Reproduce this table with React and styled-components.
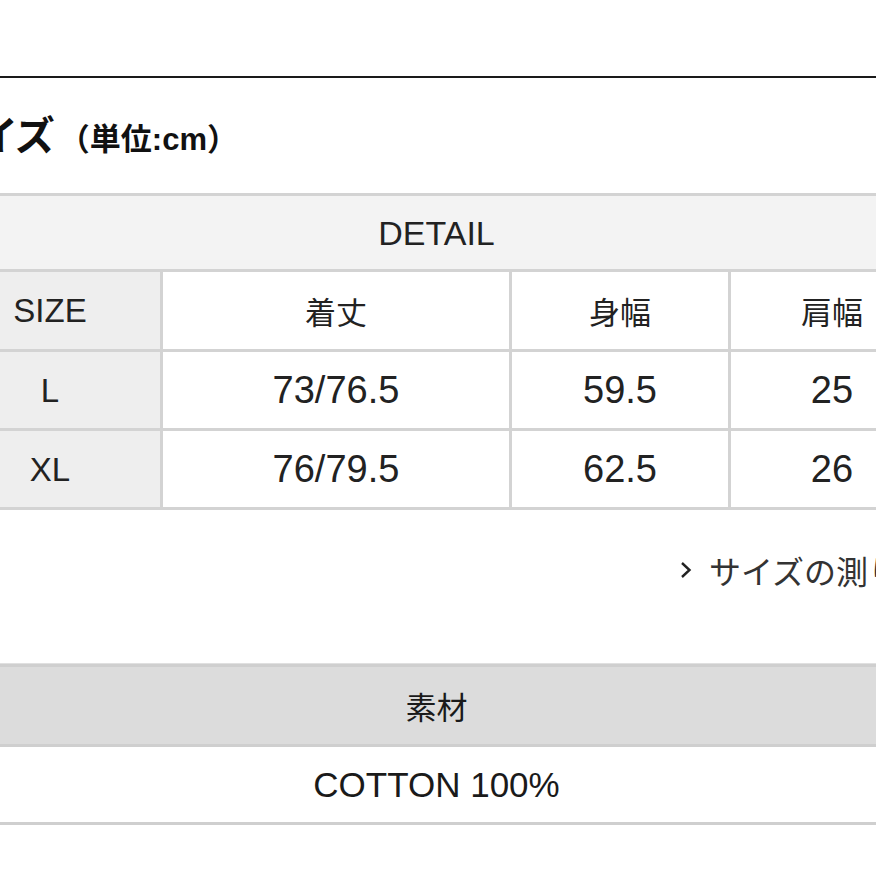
import React from 'react';
import styled, { createGlobalStyle } from 'styled-components';

const GlobalStyle = createGlobalStyle`
  html, body {
    margin: 0;
    padding: 0;
    background: #ffffff;
    overflow: hidden;
  }
  body {
    font-family: "Liberation Sans", "Noto Sans CJK JP", sans-serif;
    color: #222222;
  }
`;

const sizes = [
  { size: 'L', length: '73/76.5', body: '59.5', shoulder: '25' },
  { size: 'XL', length: '76/79.5', body: '62.5', shoulder: '26' }
];

const App = () => {
  return (
    <>
      <GlobalStyle />
      <Viewport>
        <Page>
          <Title>
            サイズ<Unit>（単位:cm）</Unit>
          </Title>

          <DetailTable>
            <HeadCell>DETAIL</HeadCell>
            <SizeCell>SIZE</SizeCell>
            <Cell $cjk>着丈</Cell>
            <Cell $cjk>身幅</Cell>
            <Cell $cjk>肩幅</Cell>
            {sizes.map((row) => (
              <React.Fragment key={row.size}>
                <SizeCell>{row.size}</SizeCell>
                <Cell>{row.length}</Cell>
                <Cell>{row.body}</Cell>
                <Cell>{row.shoulder}</Cell>
              </React.Fragment>
            ))}
          </DetailTable>

          <GuideRow>
            <GuideLink>
              <Chevron viewBox="0 0 12 18" aria-hidden="true">
                <path d="M2 2 L9.5 9 L2 16" />
              </Chevron>
              サイズの測り方
            </GuideLink>
          </GuideRow>

          <MaterialTable>
            <MaterialHead>素材</MaterialHead>
            <MaterialCell>COTTON 100%</MaterialCell>
          </MaterialTable>
        </Page>
      </Viewport>
    </>
  );
};

export default App;

const Viewport = styled.div`
  width: 876px;
  height: 876px;
  overflow: hidden;
`;

// the screenshot is a crop of a wider page, so the page runs past both edges
const Page = styled.div`
  width: 993px;
  margin-left: -60px;
  padding-top: 76px;
  &::before {
    content: '';
    display: block;
    height: 2px;
    background: #1a1a1a;
    margin-left: 60px;
    width: 876px;
  }
`;

const Title = styled.h2`
  margin: 0;
  padding: 33px 0 0 0;
  height: 80px;
  box-sizing: border-box;
  font-family: "Noto Sans CJK JP", sans-serif;
  font-weight: 700;
  font-size: 40px;
  line-height: 44px;
  color: #111111;
  letter-spacing: -2px;
  white-space: nowrap;
`;

const Unit = styled.span`
  margin-left: 6px;
  font-size: 31px;
  letter-spacing: 0;
  font-family: "Liberation Sans", "Noto Sans CJK JP", sans-serif;
  font-weight: 700;
`;

const DetailTable = styled.div`
  margin-top: 35px;
  display: grid;
  grid-template-columns: 220px 346px 216px 202px;
  grid-template-rows: 73px 77px 76px 76px;
  gap: 3px;
  padding: 3px 0;
  background: #d3d3d3;
`;

const Cell = styled.div`
  display: flex;
  align-items: center;
  justify-content: center;
  background: #ffffff;
  font-size: ${(p) => (p.$cjk ? '31px' : '38px')};
  font-family: ${(p) =>
    p.$cjk ? '"Noto Sans CJK JP", sans-serif' : '"Liberation Sans", sans-serif'};
  color: #222222;
  padding-top: ${(p) => (p.$cjk ? '0' : '1px')};
`;

const HeadCell = styled(Cell)`
  grid-column: 1 / -1;
  background: #f3f3f3;
  font-size: 34px;
`;

const SizeCell = styled(Cell)`
  background: #eeeeee;
  font-size: 33px;
`;

const GuideRow = styled.div`
  display: flex;
  justify-content: flex-end;
  padding-top: 40px;
  height: 153px;
  box-sizing: border-box;
`;

const GuideLink = styled.a`
  display: flex;
  align-items: center;
  gap: 17px;
  height: 40px;
  margin-right: 1px;
  font-family: "Noto Sans CJK JP", sans-serif;
  font-size: 32px;
  color: #333333;
  text-decoration: none;
  white-space: nowrap;
`;

const Chevron = styled.svg`
  width: 12px;
  height: 18px;
  fill: none;
  stroke: #222222;
  stroke-width: 2.4;
`;

const MaterialTable = styled.div`
  display: grid;
  grid-template-rows: 77px 75px;
  gap: 3px;
  padding: 3px 0;
  background: #cfcfcf;
  border-top: 1px solid #e0e0e0;
`;

const MaterialHead = styled.div`
  display: flex;
  align-items: center;
  justify-content: center;
  background: #dcdcdc;
  font-family: "Noto Sans CJK JP", sans-serif;
  font-size: 31px;
  color: #1a1a1a;
`;

const MaterialCell = styled.div`
  display: flex;
  align-items: center;
  justify-content: center;
  background: #ffffff;
  font-family: "Liberation Sans", sans-serif;
  font-size: 35px;
  color: #1a1a1a;
`;
